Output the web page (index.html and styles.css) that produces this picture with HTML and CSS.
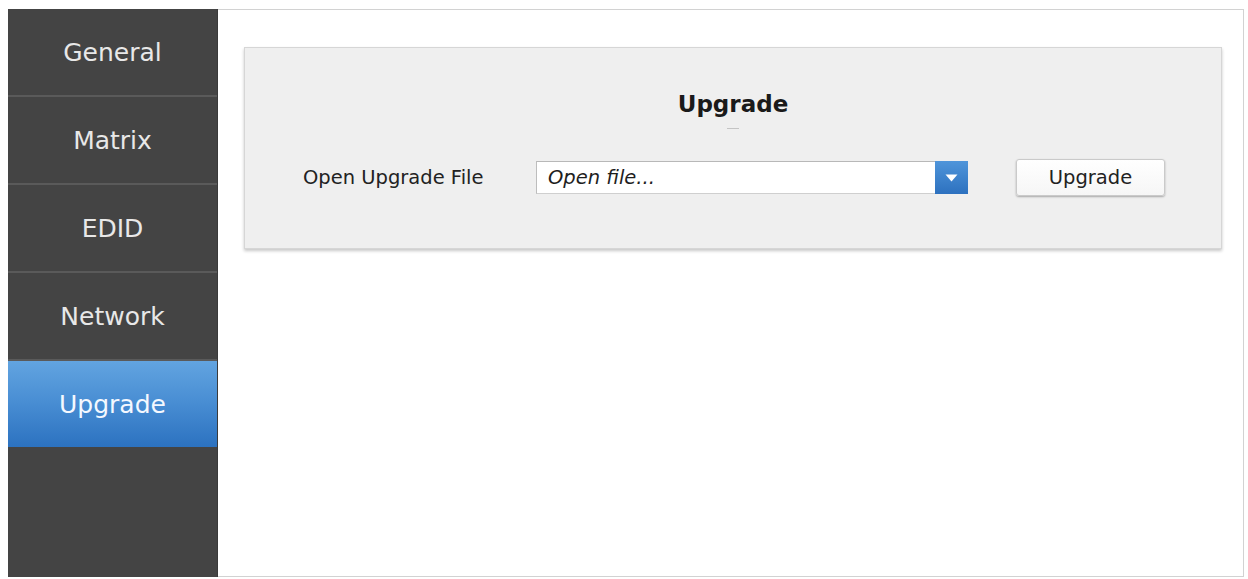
FILE: index.html
```html
<!DOCTYPE html>
<html lang="en">
<head>
<meta charset="utf-8">
<title>Upgrade</title>
<link rel="stylesheet" href="styles.css">
</head>
<body>
<div class="frame">
  <nav class="sidebar">
    <div class="nav-item">General</div>
    <div class="nav-item">Matrix</div>
    <div class="nav-item">EDID</div>
    <div class="nav-item">Network</div>
    <div class="nav-item active">Upgrade</div>
  </nav>
  <main class="content">
    <section class="panel">
      <h2 class="panel-title">Upgrade</h2>
      <div class="title-dash"></div>
      <div class="form-row">
        <label class="form-label">Open Upgrade File</label>
        <div class="file-select">
          <span class="file-text">Open file...</span>
          <span class="file-drop">
            <svg width="13" height="8" viewBox="0 0 13 8"><path d="M0.5 0.5 L12.5 0.5 L6.5 7.5 Z" fill="#fff"/></svg>
          </span>
        </div>
        <button class="btn">Upgrade</button>
      </div>
    </section>
  </main>
</div>
</body>
</html>
```
FILE: styles.css
```css
html, body {
  margin: 0;
  padding: 0;
  background: #ffffff;
}
body {
  font-family: "DejaVu Sans", "Liberation Sans", sans-serif;
}
.frame {
  display: flex;
  margin: 9px 4px 0 8px;
  height: 568px;
}
.sidebar {
  width: 210px;
  flex: 0 0 210px;
  background: #444444;
  border-right: 1px solid #3a3a3a;
  box-sizing: border-box;
}
.nav-item {
  height: 88px;
  box-sizing: border-box;
  border-bottom: 2px solid #5a5a5a;
  display: flex;
  align-items: center;
  justify-content: center;
  color: #e8e8e8;
  font-size: 25px;
}
.nav-item.active {
  height: 86px;
  border-bottom: none;
  color: #f4f8ff;
  background: linear-gradient(to bottom, #62a4e0 0%, #4a8fd4 45%, #2c72c0 100%);
}
.content {
  flex: 1;
  border: 1px solid #d2d2d2;
  border-left: none;
  padding: 37px 21px 0 26px;
}
.panel {
  height: 202px;
  box-sizing: border-box;
  background: #efefef;
  border: 1px solid #d6d6d6;
  box-shadow: 0 2px 3px rgba(0, 0, 0, 0.22);
  padding-top: 42px;
}
.panel-title {
  margin: 0;
  text-align: center;
  font-size: 23px;
  line-height: 28px;
  font-weight: bold;
  color: #1a1a1a;
}
.title-dash {
  width: 12px;
  height: 1px;
  background: #c4c4c4;
  margin: 10px auto 0;
}
.form-row {
  display: flex;
  align-items: center;
  margin-top: 30px;
  padding-left: 58px;
}
.form-label {
  width: 233px;
  font-size: 19.5px;
  color: #222222;
}
.file-select {
  width: 432px;
  height: 33px;
  box-sizing: border-box;
  display: flex;
  background: #ffffff;
  border: 1px solid #cfcfcf;
  border-top-color: #b8b8b8;
  border-left-color: #bdbdbd;
}
.file-text {
  flex: 1;
  display: flex;
  align-items: center;
  padding-left: 11px;
  font-size: 19.5px;
  font-style: italic;
  color: #1e1e1e;
}
.file-drop {
  width: 33px;
  display: flex;
  align-items: center;
  justify-content: center;
  background: linear-gradient(to bottom, #4f95da 0%, #2d71bf 100%);
  margin: -1px -1px -1px 0;
}
.btn {
  margin-left: 48px;
  width: 149px;
  height: 37px;
  box-sizing: border-box;
  background: linear-gradient(to bottom, #ffffff 0%, #f6f6f6 100%);
  border: 1px solid #cacaca;
  border-radius: 3px;
  box-shadow: 0 1px 2px rgba(0, 0, 0, 0.3);
  font-family: "DejaVu Sans", "Liberation Sans", sans-serif;
  font-size: 19.5px;
  color: #222222;
  padding: 0;
}
```
